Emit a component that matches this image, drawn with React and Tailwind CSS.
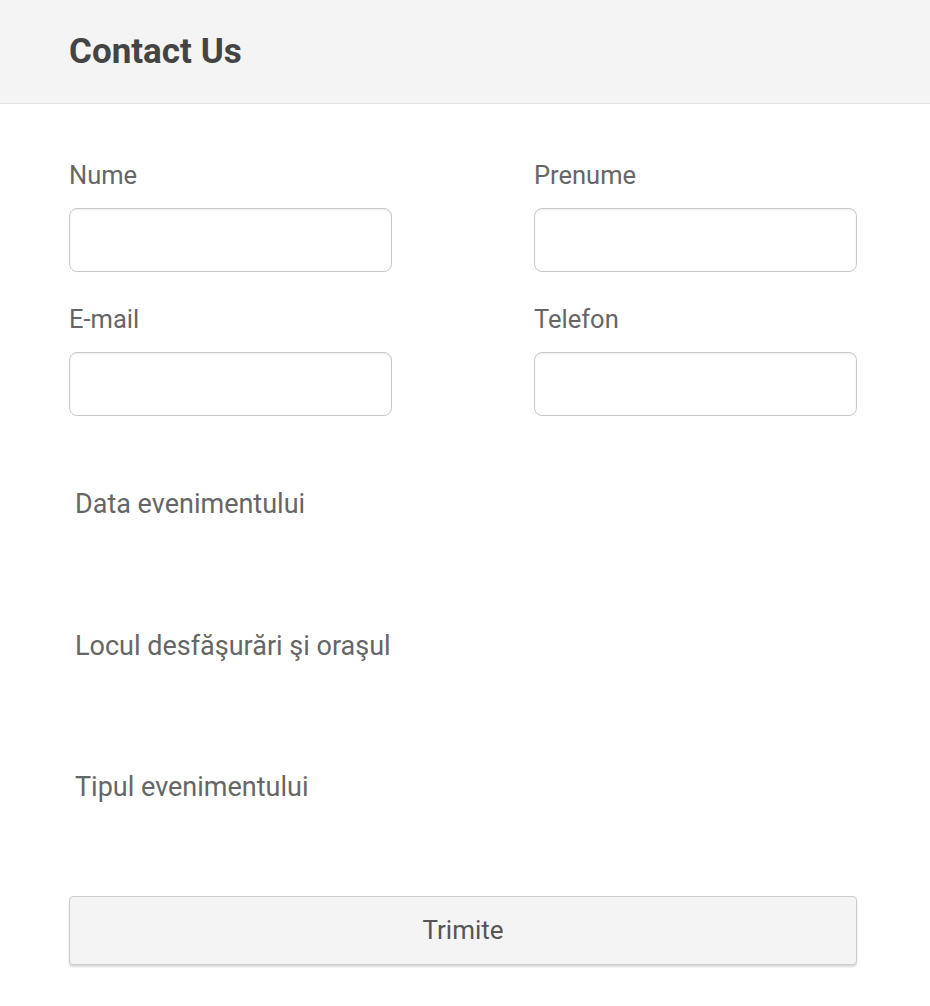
import { useState } from "react";

function Field({ label, value, onChange, type = "text" }) {
  return (
    <div>
      <label className="block text-[25.5px] leading-[28px] text-[#666]">{label}</label>
      <input
        type={type}
        value={value}
        onChange={e => onChange(e.target.value)}
        className="mt-[19px] block w-full h-[64px] rounded-[8px] border border-[#c9c9c9] bg-white px-3 text-[22px] text-[#444] outline-none shadow-[inset_0_1px_2px_rgba(0,0,0,0.08)]"
      />
    </div>
  );
}

export default function App() {
  const [form, setForm] = useState({ nume: "", prenume: "", email: "", telefon: "" });
  const set = key => val => setForm(f => ({ ...f, [key]: val }));

  return (
    <div className="min-h-screen bg-white font-['Roboto',sans-serif]">
      <div className="h-[104px] bg-[#f4f4f4] border-b border-[#e2e2e2] flex items-center px-[69px]">
        <h1 className="text-[35px] font-bold text-[#444] leading-none">Contact Us</h1>
      </div>

      <form onSubmit={e => e.preventDefault()} className="px-[69px] pt-[57px]">
        <div className="grid grid-cols-2 gap-x-[142px] gap-y-[33px] w-[788px]">
          <Field label="Nume" value={form.nume} onChange={set("nume")} />
          <Field label="Prenume" value={form.prenume} onChange={set("prenume")} />
          <Field label="E-mail" type="email" value={form.email} onChange={set("email")} />
          <Field label="Telefon" value={form.telefon} onChange={set("telefon")} />
        </div>

        <div className="pl-[6px] text-[27px] leading-[32px] text-[#666]">
          <p className="mt-[72px]">Data evenimentului</p>
          <p className="mt-[110px]">Locul desfăşurări şi oraşul</p>
          <p className="mt-[109px]">Tipul evenimentului</p>
        </div>

        <button
          type="submit"
          className="mt-[93px] w-[788px] h-[69px] rounded-[4px] border border-[#cccccc] bg-[#f4f4f4] text-[26px] text-[#555] shadow-[0_2px_2px_rgba(0,0,0,0.15)]"
        >
          Trimite
        </button>
      </form>
    </div>
  );
}
